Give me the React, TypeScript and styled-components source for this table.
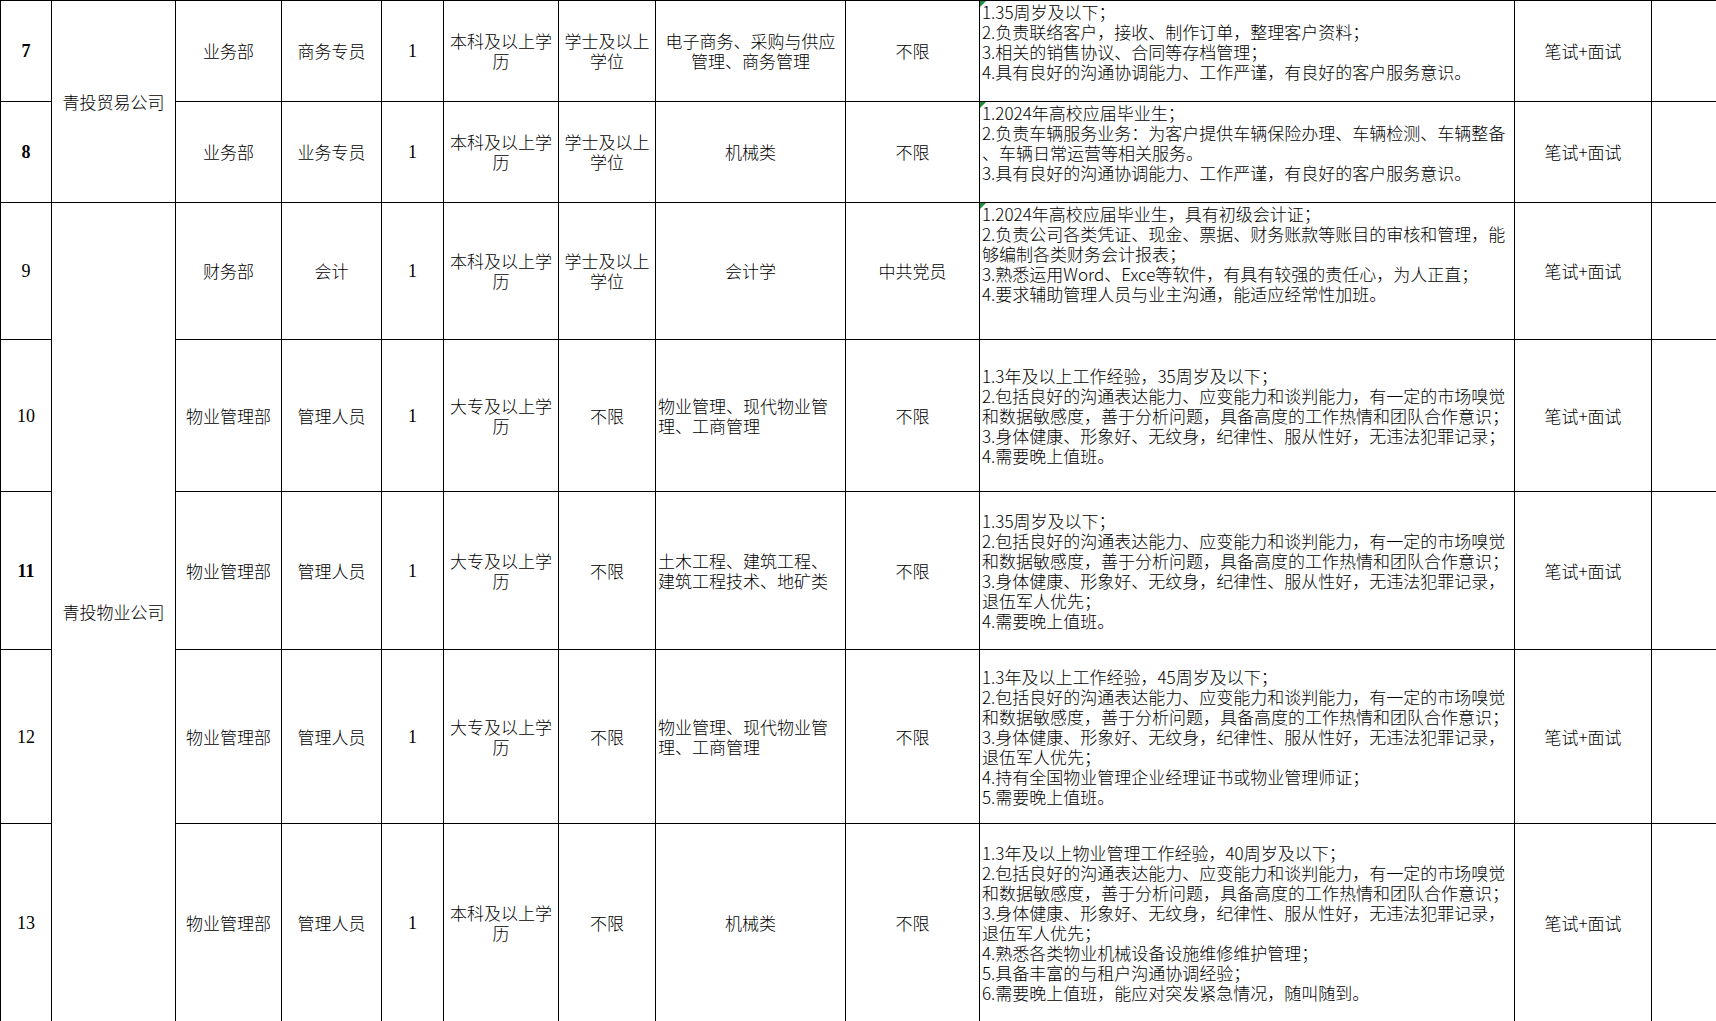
import styled, { createGlobalStyle } from 'styled-components';

type Align = 'left' | 'center';

interface IRow {
  no: string;
  boldNo?: boolean;
  company?: { name: string; span: number };
  dept: string;
  post: string;
  count: string;
  edu: string;
  degree: string;
  major: string;
  majorAlign: Align;
  politics: string;
  duties: string[];
  dutiesTop?: boolean;
  exam: string;
  height: number;
}

const COLS = [51, 124, 106, 100, 62, 115, 97, 190, 134, 535, 137, 65];

const SKILLS =
  '2.包括良好的沟通表达能力、应变能力和谈判能力，有一定的市场嗅觉和数据敏感度，善于分析问题，具备高度的工作热情和团队合作意识；';
const CONDUCT = '3.身体健康、形象好、无纹身，纪律性、服从性好，无违法犯罪记录，退伍军人优先；';

const rows: IRow[] = [
  {
    no: '7',
    boldNo: true,
    company: { name: '青投贸易公司', span: 2 },
    dept: '业务部',
    post: '商务专员',
    count: '1',
    edu: '本科及以上学历',
    degree: '学士及以上学位',
    major: '电子商务、采购与供应管理、商务管理',
    majorAlign: 'center',
    politics: '不限',
    duties: [
      '1.35周岁及以下；',
      '2.负责联络客户，接收、制作订单，整理客户资料；',
      '3.相关的销售协议、合同等存档管理；',
      '4.具有良好的沟通协调能力、工作严谨，有良好的客户服务意识。',
    ],
    dutiesTop: true,
    exam: '笔试+面试',
    height: 101,
  },
  {
    no: '8',
    boldNo: true,
    dept: '业务部',
    post: '业务专员',
    count: '1',
    edu: '本科及以上学历',
    degree: '学士及以上学位',
    major: '机械类',
    majorAlign: 'center',
    politics: '不限',
    duties: [
      '1.2024年高校应届毕业生；',
      '2.负责车辆服务业务：为客户提供车辆保险办理、车辆检测、车辆整备、车辆日常运营等相关服务。',
      '3.具有良好的沟通协调能力、工作严谨，有良好的客户服务意识。',
    ],
    dutiesTop: true,
    exam: '笔试+面试',
    height: 101,
  },
  {
    no: '9',
    company: { name: '青投物业公司', span: 5 },
    dept: '财务部',
    post: '会计',
    count: '1',
    edu: '本科及以上学历',
    degree: '学士及以上学位',
    major: '会计学',
    majorAlign: 'center',
    politics: '中共党员',
    duties: [
      '1.2024年高校应届毕业生，具有初级会计证；',
      '2.负责公司各类凭证、现金、票据、财务账款等账目的审核和管理，能够编制各类财务会计报表；',
      '3.熟悉运用Word、Exce等软件，有具有较强的责任心，为人正直；',
      '4.要求辅助管理人员与业主沟通，能适应经常性加班。',
    ],
    dutiesTop: true,
    exam: '笔试+面试',
    height: 137,
  },
  {
    no: '10',
    dept: '物业管理部',
    post: '管理人员',
    count: '1',
    edu: '大专及以上学历',
    degree: '不限',
    major: '物业管理、现代物业管理、工商管理',
    majorAlign: 'left',
    politics: '不限',
    duties: [
      '1.3年及以上工作经验，35周岁及以下；',
      SKILLS,
      '3.身体健康、形象好、无纹身，纪律性、服从性好，无违法犯罪记录；',
      '4.需要晚上值班。',
    ],
    exam: '笔试+面试',
    height: 152,
  },
  {
    no: '11',
    boldNo: true,
    dept: '物业管理部',
    post: '管理人员',
    count: '1',
    edu: '大专及以上学历',
    degree: '不限',
    major: '土木工程、建筑工程、建筑工程技术、地矿类',
    majorAlign: 'left',
    politics: '不限',
    duties: ['1.35周岁及以下；', SKILLS, CONDUCT, '4.需要晚上值班。'],
    exam: '笔试+面试',
    height: 158,
  },
  {
    no: '12',
    dept: '物业管理部',
    post: '管理人员',
    count: '1',
    edu: '大专及以上学历',
    degree: '不限',
    major: '物业管理、现代物业管理、工商管理',
    majorAlign: 'left',
    politics: '不限',
    duties: [
      '1.3年及以上工作经验，45周岁及以下；',
      SKILLS,
      CONDUCT,
      '4.持有全国物业管理企业经理证书或物业管理师证；',
      '5.需要晚上值班。',
    ],
    exam: '笔试+面试',
    height: 174,
  },
  {
    no: '13',
    dept: '物业管理部',
    post: '管理人员',
    count: '1',
    edu: '本科及以上学历',
    degree: '不限',
    major: '机械类',
    majorAlign: 'center',
    politics: '不限',
    duties: [
      '1.3年及以上物业管理工作经验，40周岁及以下；',
      SKILLS,
      CONDUCT,
      '4.熟悉各类物业机械设备设施维修维护管理；',
      '5.具备丰富的与租户沟通协调经验；',
      '6.需要晚上值班，能应对突发紧急情况，随叫随到。',
    ],
    exam: '笔试+面试',
    height: 198,
  },
];

function App() {
  return (
    <>
      <GlobalStyle />
      <Sheet>
        <colgroup>
          {COLS.map((w, i) => (
            <col key={i} style={{ width: w }} />
          ))}
        </colgroup>
        <tbody>
          {rows.map((r) => (
            <tr key={r.no} style={{ height: r.height }}>
              <NumCell $bold={r.boldNo}>{r.no}</NumCell>
              {r.company && <Cell rowSpan={r.company.span}>{r.company.name}</Cell>}
              <Cell>{r.dept}</Cell>
              <Cell>{r.post}</Cell>
              <NumCell>{r.count}</NumCell>
              <Cell>{r.edu}</Cell>
              <Cell>{r.degree}</Cell>
              <Cell $align={r.majorAlign}>{r.major}</Cell>
              <Cell>{r.politics}</Cell>
              <DutyCell $top={r.dutiesTop}>
                {r.duties.map((d, i) => (
                  <DutyLine key={i}>{d}</DutyLine>
                ))}
              </DutyCell>
              <Cell>{r.exam}</Cell>
              <Cell />
            </tr>
          ))}
        </tbody>
      </Sheet>
    </>
  );
}

const GlobalStyle = createGlobalStyle`
  html, body {
    margin: 0;
    padding: 0;
    background: #fff;
  }
  body {
    font-family: "Noto Sans CJK SC", "Noto Sans", sans-serif;
    color: #000;
  }
`;

const Sheet = styled.table`
  width: 1716px;
  table-layout: fixed;
  border-collapse: collapse;
  font-size: 17px;
  font-weight: 300;
  line-height: 20px;
`;

const Cell = styled.td<{ $align?: Align }>`
  border: 1px solid #000;
  padding: 0 2px;
  text-align: ${(p) => p.$align || 'center'};
  vertical-align: middle;
  line-break: anywhere;
  word-break: break-all;
`;

const NumCell = styled(Cell)<{ $bold?: boolean }>`
  font-family: "Liberation Serif", "Noto Sans CJK SC", serif;
  font-weight: ${(p) => (p.$bold ? 700 : 400)};
  font-size: 18px;
`;

const DutyCell = styled.td<{ $top?: boolean }>`
  position: relative;
  border: 1px solid #000;
  padding: ${(p) => (p.$top ? '1px 2px 0 2px' : '0 2px')};
  text-align: left;
  vertical-align: ${(p) => (p.$top ? 'top' : 'middle')};
  line-break: anywhere;
  word-break: break-all;

  &::before {
    content: '';
    display: ${(p) => (p.$top ? 'block' : 'none')};
    position: absolute;
    top: 0;
    left: 0;
    width: 0;
    height: 0;
    border-top: 6px solid #1e8c3a;
    border-right: 6px solid transparent;
  }
`;

const DutyLine = styled.div`
  margin: 0;
`;

export default App;
